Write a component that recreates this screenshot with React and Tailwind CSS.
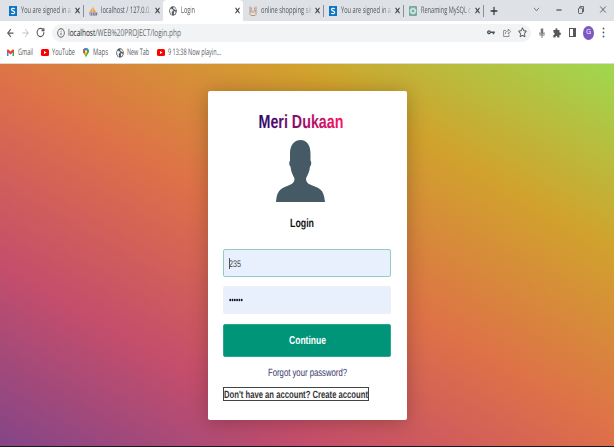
import React from "react";
import { X, Plus, ArrowLeft, ArrowRight, RotateCw, Info, Star, Puzzle, ChevronDown, Minus } from "lucide-react";

const ui = "font-['Open_Sans',sans-serif]";

/* Text set in a condensed width */
function Narrow({ w, len, children, className = "", size = 9, fill = "currentColor", font = "Open Sans", weight = 400 }) {
  return (
    <svg className={`shrink-0 overflow-visible ${className}`} width={w} height={size * 1.6}>
      <text x="0" y={size * 1.15} fontFamily={`${font}, sans-serif`} fontSize={size} fontWeight={weight} fill={fill} textLength={len ?? w} lengthAdjust="spacingAndGlyphs" textRendering="geometricPrecision">{children}</text>
    </svg>
  );
}

function SIcon() {
  return (
    <svg className="h-[10px] w-[8px] shrink-0" viewBox="0 0 8 10" preserveAspectRatio="none">
      <rect width="8" height="10" fill="#0b76c6" />
      <path d="M5.8 2.7C4.6 2 2.4 2.2 2.4 3.6S5.7 4.8 5.7 6.3 3.2 8 2.1 7.1" fill="none" stroke="#fff" strokeWidth="1.2" />
    </svg>
  );
}
function Globe() {
  return (
    <svg className="h-[10px] w-[8px] shrink-0" viewBox="0 0 20 20" preserveAspectRatio="none">
      <circle cx="10" cy="10" r="9.5" fill="#54585d" />
      <path d="M3 6c4-1 5 1 8 2 0 3-5 2-4 5s1 4 0 5C4 16 1 12 3 6zM11 2c2 0 6 2 7 6-2 1-3-1-5-1s-3-3-2-5zM12 11c3-1 5 0 5 1s-2 5-4 5 0-3-1-6z" fill="#eef0f2" />
    </svg>
  );
}
function PmaIcon() {
  return (
    <svg className="h-[10px] w-[9px] shrink-0" viewBox="0 0 18 20" preserveAspectRatio="none">
      <path d="M1 12 7 2v10zM8 12V2l6 10z" fill="#f4a43a" />
      <path d="M0 13h17l-1 6H2z" fill="#7b7da5" />
      <path d="M3 14v4M7 14v4M12 14v4" stroke="#e8d5c0" strokeWidth="1.3" />
    </svg>
  );
}
function ShopIcon() {
  return (
    <svg className="h-[10px] w-[8px] shrink-0" viewBox="0 0 16 20" preserveAspectRatio="none" fill="none" stroke="#bd927b" strokeWidth="2">
      <path d="M2 1v7c0 3 4 3 4 0M14 1v7c0 3-4 3-4 0M2 9v8l2 2h8l2-2V9M5 12h6M5 3v4M11 3v4" />
    </svg>
  );
}
function GptIcon() {
  return (
    <svg className="h-[10px] w-[8px] shrink-0" viewBox="0 0 16 20" preserveAspectRatio="none">
      <rect width="16" height="20" rx="2" fill="#74aa9c" />
      <g fill="none" stroke="#fff" strokeWidth="1">
        <ellipse cx="8" cy="10" rx="6.5" ry="3.5" transform="rotate(60 8 10)" />
        <ellipse cx="8" cy="10" rx="6.5" ry="3.5" transform="rotate(-60 8 10)" />
        <ellipse cx="8" cy="10" rx="6" ry="3.5" />
      </g>
    </svg>
  );
}
function YouTube() {
  return (
    <svg className="h-[7px] w-[8px] shrink-0" viewBox="0 0 16 14" preserveAspectRatio="none">
      <rect width="16" height="14" rx="3" fill="#f00" />
      <path d="m6 4 5 3-5 3z" fill="#fff" />
    </svg>
  );
}
function Gmail() {
  return (
    <svg className="h-[7px] w-[7px] shrink-0" viewBox="0 0 14 14" preserveAspectRatio="none">
      <path d="M0 2h3v12H0z" fill="#4285f4" />
      <path d="M11 2h3v12h-3z" fill="#34a853" />
      <path d="M0 1.5 3 1l4 4 4-4 3 .5V5l-7 6-7-6z" fill="#ea4335" />
    </svg>
  );
}
function MapsPin() {
  return (
    <svg className="h-[10px] w-[6px] shrink-0" viewBox="0 0 12 20" preserveAspectRatio="none">
      <path d="M6 0c4 0 6 3 6 6 0 5-5 7-6 14C5 13 0 11 0 6c0-3 2-6 6-6z" fill="#34a853" />
      <path d="M6 0C2 0 0 3 0 6l3 3 6-8C8 0 7 0 6 0z" fill="#4285f4" />
      <path d="M0 6c0 2 1 4 2 5l4-4-4-5C1 3 0 4 0 6z" fill="#ea4335" />
      <path d="m2 11 4-4 3 2-4 6z" fill="#fbbc04" />
      <circle cx="6" cy="6.5" r="2" fill="#fff" />
    </svg>
  );
}

function Tab({ icon, label, len, active }) {
  return (
    <div className={`flex h-[21px] w-20 shrink-0 items-center pl-[6px] ${active ? "rounded-t-[4px] bg-white" : ""}`}>
      <div className="flex w-[12px]">{icon}</div>
      <div className="w-[50px] overflow-hidden [mask-image:linear-gradient(to_right,black_42px,transparent_52px)]">
        <Narrow w={50} len={len} fill="#51555a">{label}</Narrow>
      </div>
      <X className="ml-[3px] h-[9px] w-[7px]" strokeWidth={3.2} color="#444" preserveAspectRatio="none" />
    </div>
  );
}
const Sep = () => <div className="-mx-[0.5px] h-3 w-px shrink-0 bg-[#8b8f94]" />;

function Avatar() {
  return (
    <svg className="mt-[5px] h-[62px] w-[49px]" viewBox="0 0 49 63" preserveAspectRatio="none">
      <path d="M24.500 0C31 0 34.500 5.500 34.500 14v7c1.300 1 .8 5-.5 6-.7 6-2.500 9-4 12 .2 3 1 4 2.500 5.500 4 2.500 10 3 13.500 7.500 2 3 2.500 7 3 11H0c.4-4 .6-8 3-11 3.500-4.500 9.500-5 13-7.500 1.500-1.500 2.500-2.500 2.500-5.500-1.500-3-3.300-6-4-12-1.300-1-1.800-5-.5-6v-7C14 5.500 18 0 24.500 0z" fill="#455a64" />
    </svg>
  );
}

export default function App() {
  return (
    <div className={`flex h-[447px] w-[614px] flex-col overflow-hidden bg-white ${ui}`}>
      <header className="shrink-0">
        <div className="flex h-[21px] items-center bg-[#dee1e6] pl-[3px]">
          <Tab icon={<SIcon />} label="You are signed in a" len={50} />
          <Sep />
          <Tab icon={<PmaIcon />} label="localhost / 127.0.0.1" len={53} />
          <Tab active icon={<Globe />} label="Login" len={14} />
          <Tab icon={<ShopIcon />} label="online shopping sit" len={51} />
          <Sep />
          <Tab icon={<SIcon />} label="You are signed in a" len={50} />
          <Sep />
          <Tab icon={<GptIcon />} label="Renaming MySQL c" len={50} />
          <Sep />
          <Plus className="ml-[6px] h-[12px] w-[10px]" strokeWidth={2.8} color="#333" preserveAspectRatio="none" />
          <ChevronDown className="ml-[33px] h-[11px] w-[9px] -translate-y-px" strokeWidth={2} color="#666" preserveAspectRatio="none" />
          <Minus className="ml-[14px] h-[10px] w-[8px] -translate-y-px" strokeWidth={2.5} color="#333" preserveAspectRatio="none" />
          <svg className="ml-[15px] h-[8px] w-[6px] -translate-y-px" viewBox="0 0 6 8" fill="none" stroke="#444" strokeWidth=".8"><rect x=".5" y="2" width="4" height="5.500" rx="1" /><path d="M1.800 2V.6h3.700v5H4.500" /></svg>
          <X className="ml-[14px] h-[11px] w-[10px] -translate-y-px" strokeWidth={2} color="#555" preserveAspectRatio="none" />
        </div>
        <div className="flex h-[23px] items-center pl-[6px]">
          <ArrowLeft className="h-[12px] w-[9px]" strokeWidth={2.5} color="#55595e" preserveAspectRatio="none" />
          <ArrowRight className="ml-[6px] h-[12px] w-[9px]" color="#b5b8bc" preserveAspectRatio="none" />
          <RotateCw className="ml-[6px] h-[11px] w-[9px]" strokeWidth={2.800} color="#55595e" preserveAspectRatio="none" />
          <div className="ml-[7px] flex h-[18px] w-[479px] items-center rounded-full bg-[#f1f3f4] pl-[5px]">
            <Info className="h-[10px] w-[8px]" strokeWidth={2.500} color="#55595e" preserveAspectRatio="none" />
            <svg className="ml-[3px] h-[16px] w-[115px] overflow-visible">
              <text x="0" y="10.700" fontFamily="Open Sans, sans-serif" fontSize="9.500" fill="#666a6e" textLength="113" lengthAdjust="spacingAndGlyphs" textRendering="geometricPrecision"><tspan fill="#202124">localhost</tspan>/WEB%20PROJECT/login.php</text>
            </svg>
            <svg className="ml-auto h-[7px] w-[8px]" viewBox="0 0 16 14" fill="none" stroke="#4b4f54"><circle cx="4" cy="6.500" r="2.600" strokeWidth="2.600" /><path d="M7 6.500h8.500M13 6v4.500" strokeWidth="3" /></svg>
            <svg className="ml-[8px] h-[9px] w-[8px]" viewBox="0 0 8 9" fill="none" stroke="#777" strokeWidth=".8"><path d="M3 2.500H.6v6H6V6.500M2.300 6c0-2 1.200-3 3-3V1l2.200 2.500L5.300 6V4.300" /></svg>
            <Star className="ml-[7px] mr-[4px] h-[11px] w-[9px]" strokeWidth={2.200} color="#555" preserveAspectRatio="none" />
          </div>
          <svg className="ml-[7px] h-[10px] w-[8px]" viewBox="0 0 8 10" fill="none" stroke="#777"><path d="M4 .5v5" strokeWidth="2.500" /><path d="M1 5.200h6M1.300 7h5.400M4 6v4" strokeWidth="1" /></svg>
          <svg className="ml-[7px] h-[10px] w-[8px]" viewBox="0 0 20 20" preserveAspectRatio="none" fill="#55595e"><path d="M1 4h5c-1-5 6-5 5 0h5v5c5-1 5 6 0 5v5h-5c0-4-5-4-5 0H1v-5c4 0 4-5 0-5z" /></svg>
          <div className="ml-[8px] h-[9px] w-[7px] border border-r-[3px] border-[#55595e]" />
          <div className="ml-[7px] flex h-[14px] w-[11px] items-center justify-center rounded-[50%] bg-[#7e57c2] text-[7px] text-white">G</div>
          <svg className="ml-[8px] h-[11px] w-[3px]" viewBox="0 0 3 11" fill="#55595e"><circle cx="1.500" cy="1.500" r=".9" /><circle cx="1.500" cy="5.500" r=".9" /><circle cx="1.500" cy="9.500" r=".9" /></svg>
        </div>
        <div className="flex h-[20px] items-center border-b border-[#dddcd0] pb-[2px] pl-[7px] text-[#55595e]">
          <Gmail /><Narrow className="ml-[4px]" w={15}>Gmail</Narrow>
          <div className="w-[8px]" /><YouTube /><Narrow className="ml-[3px]" w={23}>YouTube</Narrow>
          <div className="w-[8px]" /><MapsPin /><Narrow className="ml-[4px]" w={15}>Maps</Narrow>
          <div className="w-[8px]" /><Globe /><Narrow className="ml-[3px]" w={22}>New Tab</Narrow>
          <div className="w-[8px]" /><YouTube /><Narrow className="ml-[3px]" w={53}>9 13:38 Now playin...</Narrow>
        </div>
      </header>
      <main className="flex flex-1 items-start justify-center border-b border-[#201820] bg-[linear-gradient(210deg,#9fd84f,#d1a22d_25%,#de7148_50%,#c54e6b_75%,#844588)] pt-[27px]">
        <section className="flex h-[329px] w-[199px] flex-col items-center rounded-[2px] bg-white px-[15px] shadow-[0_2px_20px_rgba(0,0,0,0.25)]">
          <svg className="mt-[18px] mr-[12px] h-[26px] w-[86px] shrink-0 overflow-visible">
            <defs><linearGradient id="brand"><stop stopColor="#2a0b70" /><stop offset="1" stopColor="#ff1464" /></linearGradient></defs>
            <text x="0.500" y="19" fontFamily="Liberation Sans, sans-serif" fontWeight="700" fontSize="19" fill="url(#brand)" textLength="85" lengthAdjust="spacingAndGlyphs" textRendering="geometricPrecision">Meri Dukaan</text>
          </svg>
          <div className="mr-[13px]"><Avatar /></div>
          <div className="mt-[12px] mr-[10px] flex h-[18px] items-center">
            <Narrow w={24} size={12} font="Liberation Sans" weight={700} fill="#111">Login</Narrow>
          </div>
          <div className="mt-[17px] flex h-[28px] w-[168px] shrink-0 items-center rounded-[2px] border border-[#8dcfc4] bg-[#e8f0fe] pl-[5px]">
            <div className="h-[11px] w-px bg-[#555]" />
            <Narrow className="-ml-px mt-[2px]" w={12} size={9.5} font="Liberation Sans" fill="#444">235</Narrow>
          </div>
          <div className="mt-[9px] flex h-[28px] w-[168px] shrink-0 items-center rounded-[2px] border border-[#edf0f5] bg-[#e8f0fe] pl-[5px]">
            <svg className="h-[4px] w-[14px]" viewBox="0 0 14 4">
              {[0, 1, 2, 3, 4, 5].map((i) => <ellipse key={i} cx={1.2 + i * 2.3} cy="2" rx="0.9" ry="1.200" fill="#111" />)}
            </svg>
          </div>
          <button className="mt-[10px] flex h-[33px] w-[168px] shrink-0 items-center justify-center rounded-[2px] border border-[#28a68e] bg-[#009579]">
            <Narrow w={37} size={11.5} font="Liberation Sans" weight={700} fill="#fff">Continue</Narrow>
          </button>
          <div className="mt-[7px] flex h-[16px] items-center">
            <Narrow w={79} size={10.5} font="Liberation Sans" fill="#353568">Forgot your password?</Narrow>
          </div>
          <div className="mt-[7px] flex h-[14px] w-[146px] shrink-0 items-center self-start border border-[#444]">
            <Narrow w={144} size={10.5} font="Liberation Sans" weight={700} fill="#333">Don't have an account? Create account</Narrow>
          </div>
        </section>
      </main>
    </div>
  );
}
